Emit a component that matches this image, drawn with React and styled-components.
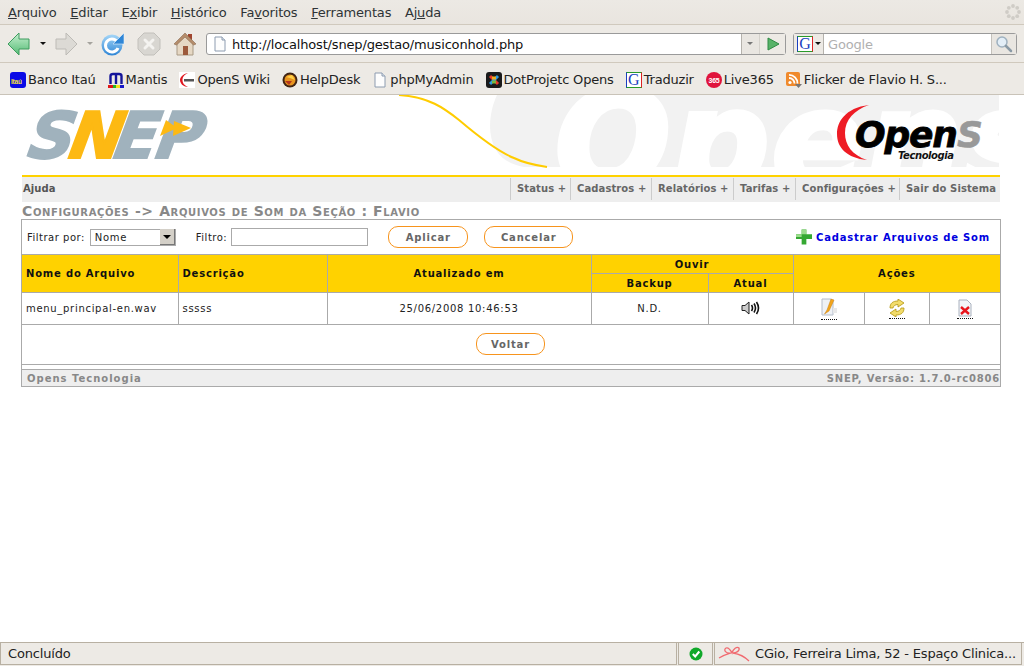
import React from 'react'
import styled, { createGlobalStyle } from 'styled-components'

const Global = createGlobalStyle`
  html, body { margin: 0; padding: 0; background: #fff; }
  body { font-family: "DejaVu Sans", sans-serif; overflow: hidden; }
`

const menus = [
  ['A', 'rquivo'], ['E', 'ditar'], ['E', 'x', 'ibir'], ['H', 'istórico'],
  ['Fa', 'v', 'oritos'], ['F', 'erramentas'], ['Aj', 'u', 'da'],
]

function MenuLabel({ parts }) {
  if (parts.length === 3) return <MenuItem>{parts[0]}<u>{parts[1]}</u>{parts[2]}</MenuItem>
  return <MenuItem><u>{parts[0]}</u>{parts[1]}</MenuItem>
}

const BackIcon = () => (
  <svg width="24" height="24" viewBox="0 0 24 24">
    <defs>
      <linearGradient id="bk" x1="0" y1="0" x2="0" y2="1">
        <stop offset="0" stopColor="#c6f0d0" /><stop offset="1" stopColor="#55bb75" />
      </linearGradient>
    </defs>
    <path d="M1 12 L12 1 V7 H22 V17 H12 V23 Z" fill="url(#bk)" stroke="#3f9c5f" strokeLinejoin="round" />
  </svg>
)
const ForwardIcon = () => (
  <svg width="24" height="24" viewBox="0 0 24 24">
    <path d="M23 12 L12 1 V7 H2 V17 H12 V23 Z" fill="#dcdad5" stroke="#bdbbb6" strokeLinejoin="round" />
  </svg>
)
const ReloadIcon = () => (
  <svg width="24" height="24" viewBox="0 0 24 24">
    <defs>
      <linearGradient id="rl" x1="0" y1="0" x2="0" y2="1">
        <stop offset="0" stopColor="#a5d6f7" /><stop offset="1" stopColor="#2f86d6" />
      </linearGradient>
    </defs>
    <circle cx="11" cy="13" r="10.500" fill="url(#rl)" />
    <path d="M17 11 A6.500 6.500 0 1 0 17 16" fill="none" stroke="#fff" strokeWidth="3" />
    <path d="M12 12 L23 12 V1 Z" fill="#2f86d6" stroke="#e8f3fc" strokeWidth=".6" />
  </svg>
)
const StopIcon = () => (
  <svg width="24" height="24" viewBox="0 0 24 24">
    <path d="M7 1 H17 L23 7 V17 L17 23 H7 L1 17 V7 Z" fill="#d8d6d1" stroke="#c2c0bb" />
    <path d="M8 8 L16 16 M16 8 L8 16" stroke="#f4f3f0" strokeWidth="3" strokeLinecap="round" />
  </svg>
)
const HomeIcon = () => (
  <svg width="24" height="24" viewBox="0 0 24 24">
    <rect x="15" y="2" width="4" height="7" fill="#a0452f" />
    <path d="M4 11 L12 4 L20 11 V23 H4 Z" fill="#e6d8c4" stroke="#a99a85" />
    <path d="M1 12 L12 1 L23 12 L20.500 13 L12 5 L3.500 13 Z" fill="#b58d6b" stroke="#8a6a50" strokeWidth=".6" />
    <rect x="10" y="14" width="5" height="9" fill="#9c5a3c" />
  </svg>
)
const PageIcon = () => (
  <svg width="16" height="16" viewBox="0 0 16 16">
    <path d="M3 1 H10 L13 4 V15 H3 Z" fill="#fdfdfd" stroke="#8d9cb0" />
    <path d="M10 1 V4 H13" fill="#dfe5ec" stroke="#8d9cb0" />
  </svg>
)
const GoogleG = () => <GBox>G</GBox>

const BookmarkIcons = {
  itau: (
    <svg width="16" height="16" viewBox="0 0 16 16">
      <rect width="16" height="16" rx="3" fill="#0a0ae6" />
      <text x="1" y="11.500" fontFamily="Liberation Sans" fontWeight="700" fontSize="6.500" fill="#f6e13a">Itaú</text>
    </svg>
  ),
  mantis: (
    <svg width="16" height="16" viewBox="0 0 16 16">
      <path d="M2.500 12 V4 Q2.500 2 5 2 H11 Q13.500 2 13.500 4 V12 M8 3 V12" fill="none" stroke="#14149a" strokeWidth="2.400" />
      <rect y="13" width="6" height="3" fill="#e01818" /><rect x="5" y="13" width="4" height="3" fill="#26b526" />
      <rect x="8" y="13" width="4" height="3" fill="#f4e020" /><rect x="12" y="13" width="4" height="3" fill="#1818c8" />
    </svg>
  ),
  opens: (
    <svg width="16" height="16" viewBox="0 0 16 16">
      <rect width="16" height="16" fill="#fff" />
      <path d="M9 1 C3 2 1 6 1 8 C1 11 4 15 9 15 C5 13 3.500 11 3.500 8 C3.500 5 5 3 9 1 Z" fill="#e0161e" />
      <rect x="5" y="7" width="10" height="2.500" fill="#555" />
    </svg>
  ),
  help: (
    <svg width="16" height="16" viewBox="0 0 16 16">
      <circle cx="8" cy="8" r="7.500" fill="#402414" />
      <circle cx="8" cy="8" r="5.500" fill="#e8941e" />
      <path d="M4 5 L10 3 L13 8 L8 6 Z" fill="#ffd24a" />
      <path d="M3 9 L7 13 L10 9 Z" fill="#b5361c" />
    </svg>
  ),
  page: <PageIcon />,
  joomla: (
    <svg width="16" height="16" viewBox="0 0 16 16">
      <rect width="16" height="16" rx="3" fill="#1a1a1a" />
      <path d="M4 4 L12 12" stroke="#e8392b" strokeWidth="3" />
      <path d="M12 4 L4 12" stroke="#2f9be0" strokeWidth="3" />
      <path d="M6 6 L10 6" stroke="#f2b01e" strokeWidth="3" />
      <path d="M6 10 L10 10" stroke="#7ab83a" strokeWidth="3" />
    </svg>
  ),
  live: (
    <svg width="16" height="16" viewBox="0 0 16 16">
      <circle cx="8" cy="8" r="8" fill="#e0143c" />
      <text x="8" y="10.500" textAnchor="middle" fontFamily="Liberation Sans" fontWeight="700" fontSize="7" fill="#fff">365</text>
    </svg>
  ),
  rss: (
    <svg width="16" height="16" viewBox="0 0 16 16">
      <rect width="14" height="14" rx="2" fill="#f08a2c" />
      <circle cx="4" cy="10.500" r="1.600" fill="#fff" />
      <path d="M3 6 A5.500 5.500 0 0 1 8.500 11.500 M3 2.800 A8.500 8.500 0 0 1 11.500 11.500" fill="none" stroke="#fff" strokeWidth="1.800" />
      <path d="M9 12 H16 L12.500 16 Z" fill="#777" />
    </svg>
  ),
}

const bookmarks = [
  ['itau', 'Banco Itaú'], ['mantis', 'Mantis'], ['opens', 'OpenS Wiki'], ['help', 'HelpDesk'],
  ['page', 'phpMyAdmin'], ['joomla', 'DotProjetc Opens'], ['g', 'Traduzir'], ['live', 'Live365'],
  ['rss', 'Flicker de Flavio H. S...'],
]

const navItems = [
  ['Status +', 60], ['Cadastros +', 81], ['Relatórios +', 82], ['Tarifas +', 62],
  ['Configurações +', 104], ['Sair do Sistema', 101],
]

const snepLetters = [
  ['S', 31, '#a0b2bd'], ['N', 72, '#fdb913'], ['E', 117, '#a0b2bd'], ['P', 159, '#a0b2bd'],
]

const Banner = () => (
  <svg width="978" height="80" viewBox="22 95 978 80" style={{ display: 'block' }}>
    <defs>
      <clipPath id="artClip">
        <path d="M498 95 C490 112 488 135 497 150 C503 160 512 164 525 167 H1000 V95 Z" />
      </clipPath>
    </defs>
    <g clipPath="url(#artClip)">
      <rect x="480" y="95" width="520" height="72" fill="#f2f2f2" />
      <text x="556" y="188" fontFamily="DejaVu Sans" fontWeight="700" fontStyle="italic" fontSize="136" fill="#fff" stroke="#fff" strokeWidth="5" textLength="490">Opens</text>
    </g>
    <path d="M400 95 C430 97 445 108 460 120 C480 137 500 152 515 158 C525 163 535 165 548 167" fill="none" stroke="#ffcc00" strokeWidth="2" />
    <g transform="translate(24 0) skewX(-10)" fontFamily="DejaVu Sans" fontWeight="700" fontStyle="italic" fontSize="64">
      {snepLetters.map(([l, x, c]) => (
        <text key={l} x={x} y="158" fill={c} stroke={c} strokeWidth="2">{l}</text>
      ))}
    </g>
    <path d="M167 120 L178 128 L161 136 Z M175 121 L192 128 L174 136 Z" fill="#fdb913" />
    <path d="M870 105 C846 108 838 122 838 134 C838 148 848 158 868 160 C853 155 846 145 846 133 C846 120 855 110 870 105 Z" fill="#ee1c25" />
    <text x="856" y="147" fontFamily="DejaVu Sans" fontWeight="700" fontStyle="italic" fontSize="36" fill="#000" stroke="#000" strokeWidth=".8" textLength="103">Open</text>
    <text x="958" y="147" fontFamily="DejaVu Sans" fontWeight="700" fontStyle="italic" fontSize="36" fill="#999" stroke="#999" strokeWidth=".6">S</text>
    <text x="899" y="159" fontFamily="DejaVu Sans" fontWeight="700" fontStyle="italic" fontSize="10" fill="#111" textLength="56">Tecnologia</text>
  </svg>
)

const PlusIcon = () => (
  <svg width="16" height="16" viewBox="0 0 17 16">
    <path d="M6 0 H11 V5 H17 V10 H11 V16 H6 V10 H0 V5 H6 Z" fill="#35a832" />
    <path d="M6 0 H11 V5 H6 Z M0 5 H6 V8 H0 Z" fill="#9bdc8c" />
  </svg>
)
const SpeakerIcon = () => (
  <svg width="20" height="14" viewBox="0 0 20 14">
    <path d="M1 4.500 H4 L8 1 V13 L4 9.500 H1 Z" fill="#ccc" stroke="#222" />
    <path d="M10.500 4 Q12.500 7 10.500 10 M13 2.500 Q16 7 13 11.500 M15.500 1 Q19.500 7 15.500 13" fill="none" stroke="#111" strokeWidth="1.600" />
  </svg>
)
const EditIcon = () => (
  <svg width="16" height="20" viewBox="0 0 16 20">
    <path d="M1 1 H10 L12 3 V17 H1 Z" fill="#eef1f6" stroke="#b5bdca" />
    <path d="M10 1 L6 12 L3.500 16 L8 13 L13 2 Z" fill="#f2a51c" stroke="#c67e12" strokeWidth=".5" />
    <path d="M12 10 H16 V15 H12 Z" fill="#e8e8e8" />
  </svg>
)
const SyncIcon = () => (
  <svg width="16" height="18" viewBox="0 0 16 18">
    <path d="M1 9 C1 4 4 2 9 2 V0 L15 4 L9 8 V5.500 C6 5.500 4.500 7 4 9 Z" fill="#f2dc6a" stroke="#b4960f" strokeWidth=".8" />
    <path d="M15 9 C15 14 12 16 7 16 V18 L1 14 L7 10 V12.500 C10 12.500 11.500 11 12 9 Z" fill="#f2dc6a" stroke="#b4960f" strokeWidth=".8" />
  </svg>
)
const DeleteIcon = () => (
  <svg width="16" height="18" viewBox="0 0 16 18">
    <path d="M2 1 H10 L14 5 V17 H2 Z" fill="#f3f5f8" stroke="#aab2bf" />
    <path d="M4 8 L12 15 M12 8 L4 15" stroke="#e8141c" strokeWidth="2.400" />
  </svg>
)

export default function App() {
  return (
    <Screen>
      <Global />
      <MenuBar>
        {menus.map((m, i) => <MenuLabel key={i} parts={m} />)}
        <Throbber>
          <svg width="16" height="16" viewBox="0 0 16 16">
            {[[8, 2], [12.200, 3.800], [14, 8], [12.200, 12.200], [8, 14], [3.800, 12.200], [2, 8], [3.800, 3.800]].map(([x, y]) => (
              <circle key={x + '-' + y} cx={x} cy={y} r="1.900" fill="#cfccc6" />
            ))}
          </svg>
        </Throbber>
      </MenuBar>
      <NavToolbar>
        <ToolBtn><BackIcon /></ToolBtn>
        <Caret $w={23} />
        <ToolBtn><ForwardIcon /></ToolBtn>
        <Caret $w={23} $off />
        <ToolBtn><ReloadIcon /></ToolBtn>
        <Spacer $w={12} />
        <ToolBtn><StopIcon /></ToolBtn>
        <Spacer $w={12} />
        <ToolBtn><HomeIcon /></ToolBtn>
        <Spacer $w={9} />
        <UrlBar>
          <UrlIcon><PageIcon /></UrlIcon>
          <UrlText>http://localhost/snep/gestao/musiconhold.php</UrlText>
          <UrlDrop><Caret $w={16} $off $dark /></UrlDrop>
          <UrlGo>
            <svg width="14" height="14" viewBox="0 0 14 14"><path d="M2 1 L13 7 L2 13 Z" fill="#58b368" stroke="#2f8a45" /></svg>
          </UrlGo>
        </UrlBar>
        <Spacer $w={7} />
        <SearchBar>
          <SearchEngine><GoogleG /><Caret $w={9} /></SearchEngine>
          <SearchText>Google</SearchText>
          <SearchBtn>
            <svg width="18" height="18" viewBox="0 0 18 18">
              <circle cx="7" cy="7" r="5" fill="#e3eef7" stroke="#9fb1bf" strokeWidth="1.500" />
              <path d="M11 11 L16 16" stroke="#8a9aa6" strokeWidth="2.500" strokeLinecap="round" />
            </svg>
          </SearchBtn>
        </SearchBar>
      </NavToolbar>
      <BookmarkBar>
        {bookmarks.map(([k, label]) => (
          <Bookmark key={k}>
            {k === 'g' ? <GoogleG /> : BookmarkIcons[k]}
            <span>{label}</span>
          </Bookmark>
        ))}
      </BookmarkBar>

      <Page>
        <Banner />
        <MainNav>
          <NavHelp>Ajuda</NavHelp>
          {navItems.map(([label, w]) => <NavLink key={label} $w={w}>{label}</NavLink>)}
        </MainNav>
        <PageTitle>Configurações -&gt; Arquivos de Som da Seção : Flavio</PageTitle>
        <Panel>
          <FilterBar>
            <FilterLabel $right={5}>Filtrar por:</FilterLabel>
            <FakeSelect>Nome<SelectArrow /></FakeSelect>
            <FilterLabel $left={20} $right={4}>Filtro:</FilterLabel>
            <FilterInput />
            <OrangeBtn $w={80} $left={20}>Aplicar</OrangeBtn>
            <OrangeBtn $w={89} $left={16}>Cancelar</OrangeBtn>
            <AddLink><PlusIcon /><span>Cadastrar Arquivos de Som</span></AddLink>
          </FilterBar>
          <DataTable>
            <colgroup>
              <col style={{ width: 156 }} /><col style={{ width: 149 }} /><col style={{ width: 264 }} />
              <col style={{ width: 117 }} /><col style={{ width: 85 }} />
              <col style={{ width: 71 }} /><col style={{ width: 65 }} /><col style={{ width: 71 }} />
            </colgroup>
            <thead>
              <tr>
                <HeadCell rowSpan="2" $left>Nome do Arquivo</HeadCell>
                <HeadCell rowSpan="2" $left>Descrição</HeadCell>
                <HeadCell rowSpan="2">Atualizado em</HeadCell>
                <HeadCell colSpan="2" $h={18}>Ouvir</HeadCell>
                <HeadCell colSpan="3" rowSpan="2">Ações</HeadCell>
              </tr>
              <tr>
                <HeadCell $h={18}>Backup</HeadCell>
                <HeadCell $h={18}>Atual</HeadCell>
              </tr>
            </thead>
            <tbody>
              <tr>
                <BodyCell $left>menu_principal-en.wav</BodyCell>
                <BodyCell $left>sssss</BodyCell>
                <BodyCell>25/06/2008 10:46:53</BodyCell>
                <BodyCell>N.D.</BodyCell>
                <BodyCell><SpeakerIcon /></BodyCell>
                <BodyCell><ActionIcon><EditIcon /></ActionIcon></BodyCell>
                <BodyCell><ActionIcon><SyncIcon /></ActionIcon></BodyCell>
                <BodyCell><ActionIcon><DeleteIcon /></ActionIcon></BodyCell>
              </tr>
            </tbody>
          </DataTable>
          <BackRow><OrangeBtn $w={69}>Voltar</OrangeBtn></BackRow>
          <Gap />
          <Footer>
            <FooterBrand>Opens Tecnologia</FooterBrand>
            <span>SNEP, Versão: 1.7.0-rc0806</span>
          </Footer>
        </Panel>
      </Page>

      <StatusBar>
        <StatusCell $flex>Concluído</StatusCell>
        <StatusCell $w={35} $center>
          <svg width="14" height="14" viewBox="0 0 14 14">
            <circle cx="7" cy="7" r="6.500" fill="#10a82a" />
            <path d="M3.800 7 L6.200 9.500 L10.300 4.500" fill="none" stroke="#fff" strokeWidth="2" />
          </svg>
        </StatusCell>
        <StatusCell $w={308} $pad={3}>
          <svg width="32" height="18" viewBox="0 0 32 18" style={{ flexShrink: 0, marginRight: 5 }}>
            <path d="M1 13 C6 10 10 9 13 8 C8 9 5 5 8 3 C11 2 13 6 14 8 C15 4 19 1 21 3 C22 6 18 8 15 8 C21 9 27 12 31 16" fill="none" stroke="#f06a70" strokeWidth="1.300" />
          </svg>
          CGio, Ferreira Lima, 52 - Espaço Clinica...
        </StatusCell>
      </StatusBar>
    </Screen>
  )
}

const Screen = styled.div`
  width: 1024px;
  height: 666px;
  display: flex;
  flex-direction: column;
  overflow: hidden;
`

const MenuBar = styled.div`
  height: 24px;
  padding-left: 8px;
  display: flex;
  align-items: center;
  gap: 13.700px;
  background: linear-gradient(#ece9e4, #e9e5df);
  border-bottom: 1px solid #d0c9bd;
`

const MenuItem = styled.span`
  font-size: 13px;
  letter-spacing: -.17px;
  color: #2e3436;
`

const Throbber = styled.span`
  margin-left: auto;
  margin-right: 3px;
  height: 16px;
`

const NavToolbar = styled.div`
  height: 38px;
  box-sizing: border-box;
  padding: 0 7px;
  display: flex;
  align-items: center;
  background: #edeae5;
  border-bottom: 1px solid #d0c9bd;
`

const ToolBtn = styled.span`
  width: 24px;
  height: 24px;
  flex-shrink: 0;
`

const Spacer = styled.span`
  width: ${p => p.$w}px;
  flex-shrink: 0;
`

const Caret = styled.span`
  width: ${p => p.$w}px;
  flex-shrink: 0;
  display: flex;
  justify-content: center;
  &::after {
    content: "";
    border-left: 3px solid transparent;
    border-right: 3px solid transparent;
    border-top: 3px solid ${p => (p.$dark ? '#777' : p.$off ? '#a5a39e' : '#111')};
  }
`

const UrlBar = styled.div`
  width: 580px;
  height: 22px;
  box-sizing: border-box;
  display: flex;
  align-items: stretch;
  background: #fff;
  border: 1px solid #9a9a9a;
  border-radius: 3px;
`

const UrlIcon = styled.span`
  width: 25px;
  display: flex;
  align-items: center;
  justify-content: center;
`

const UrlText = styled.span`
  flex: 1;
  font-size: 13px;
  letter-spacing: -.16px;
  line-height: 22px;
  color: #111;
`

const UrlDrop = styled.span`
  width: 17px;
  display: flex;
  align-items: center;
  background: #e9e6e1;
  border-left: 1px solid #b5b2ac;
`

const UrlGo = styled.span`
  width: 25px;
  display: flex;
  align-items: center;
  justify-content: center;
  background: #edeae5;
  border-left: 1px solid #d4d1cb;
`

const SearchBar = styled.div`
  width: 224px;
  height: 22px;
  box-sizing: border-box;
  display: flex;
  align-items: stretch;
  background: #fff;
  border: 1px solid #9a9a9a;
  border-radius: 3px;
`

const SearchEngine = styled.span`
  width: 30px;
  padding-left: 3px;
  box-sizing: border-box;
  display: flex;
  align-items: center;
  background: #edeae5;
  border-right: 1px solid #b5b2ac;
`

const SearchText = styled.span`
  flex: 1;
  padding-left: 4px;
  font-size: 13px;
  letter-spacing: -.16px;
  line-height: 22px;
  color: #b0b0b0;
`

const SearchBtn = styled.span`
  width: 24px;
  display: flex;
  align-items: center;
  justify-content: center;
  background: #e9e6e1;
  border-left: 1px solid #c4c1bb;
`

const GBox = styled.span`
  width: 16px;
  height: 16px;
  box-sizing: border-box;
  display: inline-flex;
  align-items: center;
  justify-content: center;
  background: #fff;
  border: 1px solid #2a9a2a;
  border-right-color: #d22;
  border-left-color: #1a3fc0;
  font-family: "Liberation Serif", serif;
  font-size: 16px;
  line-height: 14px;
  color: #1a3fc0;
  flex-shrink: 0;
`

const BookmarkBar = styled.div`
  height: 32px;
  box-sizing: border-box;
  padding: 2px 0 0 10px;
  display: flex;
  align-items: center;
  gap: 12px;
  background: #edeae5;
  border-bottom: 1px solid #c9c3b8;
`

const Bookmark = styled.span`
  display: flex;
  align-items: center;
  gap: 2px;
  font-size: 13px;
  letter-spacing: -.19px;
  color: #222;
  svg { flex-shrink: 0; }
`

const Page = styled.div`
  flex: 1;
  padding: 0 23px 0 21px;
  background: #fff;
`

const MainNav = styled.div`
  margin: 0 1px;
  height: 27px;
  box-sizing: border-box;
  padding-top: 1px;
  display: flex;
  align-items: flex-start;
  background: #eee;
  border-top: 2px solid #ffd200;
  background-clip: padding-box;
`

const NavHelp = styled.span`
  flex: 1;
  padding-left: 1px;
  font-size: 10px;
  line-height: 22px;
  font-weight: 700;
  letter-spacing: .1px;
  color: #555;
`

const NavLink = styled.span`
  width: ${p => p.$w}px;
  height: 22px;
  box-sizing: border-box;
  padding-left: 6px;
  border-left: 1px solid #ccc;
  font-size: 10px;
  line-height: 22px;
  font-weight: 700;
  letter-spacing: .1px;
  color: #666;
  white-space: nowrap;
`

const PageTitle = styled.div`
  height: 17px;
  padding-left: 1px;
  font-size: 14px;
  line-height: 19px;
  font-weight: 700;
  font-variant: small-caps;
  letter-spacing: .62px;
  color: #888;
`

const Panel = styled.div`
  border: 1px solid #aaa;
`

const FilterBar = styled.div`
  height: 35px;
  box-sizing: border-box;
  padding-left: 5px;
  display: flex;
  align-items: center;
  border-bottom: 1px solid #aaa;
`

const FilterLabel = styled.span`
  margin-left: ${p => p.$left || 0}px;
  margin-right: ${p => p.$right}px;
  font-size: 10px;
  letter-spacing: .5px;
  color: #222;
`

const FakeSelect = styled.span`
  width: 86px;
  height: 17px;
  box-sizing: border-box;
  padding-left: 4px;
  display: flex;
  align-items: center;
  justify-content: space-between;
  border: 1px solid #aaa;
  font-size: 10px;
  letter-spacing: .7px;
  color: #222;
`

const SelectArrow = styled.span`
  width: 14px;
  height: 15px;
  display: flex;
  align-items: center;
  justify-content: center;
  background: #d4d0c8;
  border-right: 1px solid #777;
  border-bottom: 1px solid #777;
  &::after {
    content: "";
    border-left: 4px solid transparent;
    border-right: 4px solid transparent;
    border-top: 4px solid #000;
  }
`

const FilterInput = styled.input`
  width: 137px;
  height: 18px;
  box-sizing: border-box;
  padding: 0;
  border: 1px solid #aaa;
  background: #fff;
`

const OrangeBtn = styled.span`
  width: ${p => p.$w}px;
  height: 22px;
  box-sizing: border-box;
  margin-left: ${p => p.$left || 0}px;
  display: flex;
  align-items: center;
  justify-content: center;
  border: 1px solid #f7941d;
  border-radius: 10px;
  font-size: 10px;
  font-weight: 700;
  letter-spacing: .8px;
  color: #666;
`

const AddLink = styled.span`
  margin-left: auto;
  margin-right: 10px;
  display: flex;
  align-items: center;
  gap: 4px;
  font-size: 10px;
  font-weight: 700;
  letter-spacing: .8px;
  color: #0000e0;
`

const DataTable = styled.table`
  width: 100%;
  table-layout: fixed;
  border-collapse: collapse;
`

const HeadCell = styled.th`
  ${p => (p.$h ? `height: ${p.$h}px;` : '')}
  padding: 0 ${p => (p.$left ? '4px' : '0')};
  border: 1px solid #aaa;
  border-top: 0;
  background: #ffd200;
  font-size: 10px;
  font-weight: 700;
  letter-spacing: .8px;
  text-align: ${p => (p.$left ? 'left' : 'center')};
  color: #111;
  &:first-child { border-left: 0; }
  &:last-child { border-right: 0; }
`

const BodyCell = styled.td`
  height: 31px;
  padding: 0 ${p => (p.$left ? '4px' : '0')};
  border: 1px solid #aaa;
  font-size: 10px;
  letter-spacing: .7px;
  text-align: ${p => (p.$left ? 'left' : 'center')};
  color: #222;
  &:first-child { border-left: 0; }
  &:last-child { border-right: 0; }
`

const ActionIcon = styled.span`
  display: inline-block;
  padding-bottom: 1px;
  border-bottom: 1px dotted #111;
  line-height: 0;
`

const BackRow = styled.div`
  height: 40px;
  box-sizing: border-box;
  padding: 0 1px 1px 0;
  display: flex;
  align-items: center;
  justify-content: center;
  border-bottom: 1px solid #aaa;
`

const Gap = styled.div`
  height: 4px;
  border-bottom: 1px solid #aaa;
`

const Footer = styled.div`
  height: 16px;
  padding: 0 0 0 5px;
  display: flex;
  align-items: center;
  justify-content: space-between;
  background: #eee;
  font-size: 10px;
  font-weight: 700;
  letter-spacing: .8px;
  color: #888;
`

const FooterBrand = styled.span`
  letter-spacing: 1px;
`

const StatusBar = styled.div`
  height: 24px;
  box-sizing: border-box;
  padding: 0 2px 1px 0;
  display: flex;
  gap: 1px;
  background: #edeae5;
  border-top: 1px solid #b8b0a2;
`

const StatusCell = styled.div`
  ${p => (p.$flex ? 'flex: 1;' : `width: ${p.$w}px;`)}
  box-sizing: border-box;
  padding-left: ${p => (p.$center ? 0 : p.$pad || 7)}px;
  display: flex;
  align-items: center;
  justify-content: ${p => (p.$center ? 'center' : 'flex-start')};
  border-left: 1px solid #b8b0a2;
  border-right: 1px solid #b8b0a2;
  border-bottom: 1px solid #b8b0a2;
  font-size: 13px;
  letter-spacing: -.17px;
  color: #222;
  white-space: nowrap;
  overflow: hidden;
`
